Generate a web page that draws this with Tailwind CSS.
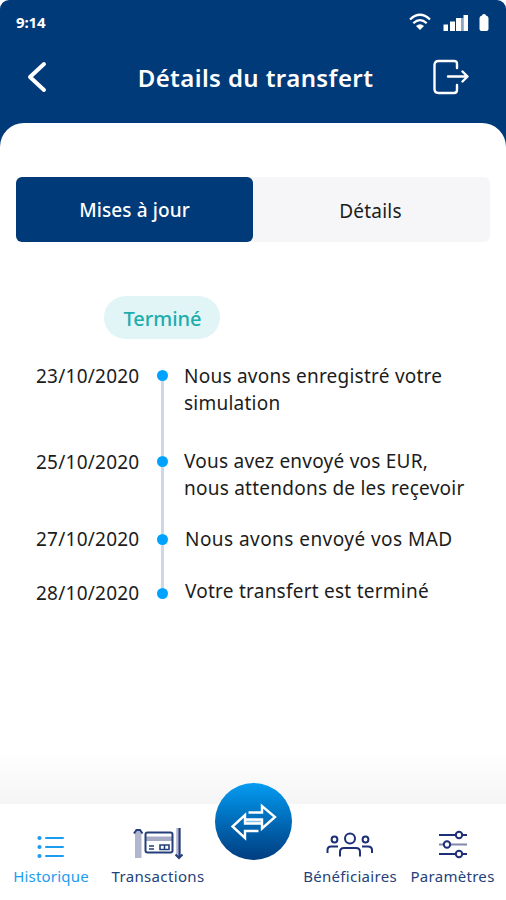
<!DOCTYPE html>
<html lang="fr">
<head>
<meta charset="utf-8">
<title>Détails du transfert</title>
<script src="https://cdn.jsdelivr.net/npm/@tailwindcss/browser@4"></script>
</head>
<body class="bg-white">
<div class="w-[506px] h-[900px] overflow-hidden flex flex-col rounded-t-[9px] bg-[#003a79] font-['Noto_Sans','Open_Sans',sans-serif] text-[#1c1c1c] whitespace-nowrap">
  <header class="h-[123px] shrink-0 text-white">
    <div class="h-[44px] pl-4 pr-[17px] flex items-center justify-between">
      <span class="text-[15px] font-bold leading-none tracking-[-0.1px]">9:14</span>
      <svg class="w-[80px] h-[20px]" viewBox="0 0 80 20" fill="none">
        <g stroke="#fff" stroke-width="2.2"><path d="M1 7.500Q11 -2 21 7.500M4.300 11.200Q11 5 17.700 11.200"/></g>
        <path d="M7 14Q11 10.500 15 14L11 18Z" fill="#fff"/>
        <path d="M34.500 12.500h4.500v6.500h-4.500zM41 9.500h5v9.500h-5zM47 6h5v13h-5zM54.500 3h4.500v16h-4.500z" fill="#fff"/>
        <path d="M52 6h2.500v13h-2.500z" fill="#fff" fill-opacity=".55"/>
        <path d="M73 3.500q0-1.500 2-1.500t2 1.500q2.500 .5 2.500 2.500V17q0 2-2 2h-5q-2 0-2-2V6q0-2 2.500-2.500z" fill="#fff"/>
      </svg>
    </div>
    <div class="h-[66px] pl-[26px] pr-[37px] grid grid-cols-[22px_1fr_36px] items-center">
      <svg class="w-[22px] h-[32px]" viewBox="0 0 22 32" fill="none" stroke="#fff" stroke-width="4" stroke-linecap="round" stroke-linejoin="round"><path d="M18 3L4 16L18 29"/></svg>
      <h1 class="text-[24px] font-semibold leading-none tracking-[0.4px] pl-[30px] pt-px text-center">Détails du transfert</h1>
      <svg class="w-[36px] h-[36px]" viewBox="0 0 36 36" fill="none" stroke="#fff" stroke-width="2.400" stroke-linecap="round" stroke-linejoin="round"><path d="M24 9V5Q24 2 21 2H5.500Q1.500 2 1.500 6V30Q1.500 34 5.500 34H21Q24 34 24 31V26M15 17.500H34M29.500 12.500L34.500 17.500L29.500 22.500"/></svg>
    </div>
  </header>
  <main class="flex-1 bg-white rounded-t-[24px] flex flex-col">
    <div class="mt-[54px] mx-4 h-[65px] flex rounded-[6px] bg-[#f6f6f8] text-[19px]">
      <div class="w-[237px] rounded-[6px] bg-[#003a79] text-white font-medium tracking-[0.1px] flex items-center justify-center pt-px">Mises à jour</div>
      <div class="flex-1 flex items-center justify-center pt-[3px] pr-[2px] tracking-[0.2px]">Détails</div>
    </div>
    <div class="mt-[54px] ml-[104px] w-[116px] h-[43px] rounded-full bg-[#e1f5f7] text-[#1cadac] text-[20px] font-medium flex items-center justify-center pt-[2px] pl-px">Terminé</div>
    <div class="mt-[23px] pl-9 flex flex-col text-[19px] leading-[27px] tracking-[0.24px]">
      <div class="h-[86px] flex"><span class="w-[120px] pt-px">23/10/2020</span><span class="w-3 mr-4 flex flex-col items-center pt-[7.5px] -mb-[7.5px]"><i class="size-[11px] shrink-0 rounded-full bg-[#00a2ff]"></i><i class="w-[3px] flex-1 bg-[#ccd8e6]"></i></span><p class="pt-px">Nous avons enregistré votre<br>simulation</p></div>
      <div class="h-[78px] flex"><span class="w-[120px] pt-px">25/10/2020</span><span class="w-3 mr-4 flex flex-col items-center pt-[7.5px] -mb-[7.5px]"><i class="size-[11px] shrink-0 rounded-full bg-[#00a2ff]"></i><i class="w-[3px] flex-1 bg-[#ccd8e6]"></i></span><p>Vous avez envoyé vos EUR,<br>nous attendons de les reçevoir</p></div>
      <div class="h-[54px] flex"><span class="w-[120px]">27/10/2020</span><span class="w-3 mr-[17px] flex flex-col items-center pt-[7.5px] -mb-[7.5px]"><i class="size-[11px] shrink-0 rounded-full bg-[#00a2ff]"></i><i class="w-[3px] flex-1 bg-[#ccd8e6]"></i></span><p class="tracking-[0.45px]">Nous avons envoyé vos MAD</p></div>
      <div class="h-[27px] flex"><span class="w-[120px]">28/10/2020</span><span class="w-3 mr-[17px] flex flex-col items-center pt-[7.5px]"><i class="size-[11px] shrink-0 rounded-full bg-[#00a2ff]"></i></span><p class="-mt-[2px]">Votre transfert est terminé</p></div>
    </div>
    <div class="mt-auto h-[54px] bg-linear-to-b from-white to-[#f5f5f5]"></div>
  </main>
  <nav class="relative h-[96px] shrink-0 bg-white text-[15px] text-[#243f7a] leading-[20px] flex">
    <div class="w-[102px] pt-[26px] flex flex-col items-center text-[#1c9cf0]">
      <svg class="w-[28px] h-[36px]" viewBox="0 0 28 36" stroke="#1c9cf0" stroke-width="2" stroke-linecap="round"><path d="M9 8H26M9 17H26M9 26H26"/><path d="M2.500 8h.01M2.500 17h.01M2.500 26h.01" stroke-width="4.200"/></svg>
      <span class="tracking-[0.2px]">Historique</span>
    </div>
    <div class="w-[112px] pt-[20px] flex flex-col items-center">
      <svg class="w-[52px] h-[42px]" viewBox="0 0 52 42" fill="none" stroke="#243f7a" stroke-width="2">
        <path d="M3 7h6.500v27H3z" fill="#b2b5ce" stroke="none"/><path d="M2 9.500L4.500 6H8L10.500 9.500"/>
        <path d="M14 12.500h26v4.500H14z" fill="#a6aac5" stroke="none"/><rect x="13.500" y="8.500" width="27" height="20" rx="2"/>
        <path d="M17 22h5M17 25h5M28 21h9v4.500h-9zM32.500 21v4.500" stroke-width="1.600"/>
        <path d="M46.500 4V32" stroke-width="4.500" stroke="#b2b5ce"/><path d="M47.500 4V33M43.500 30.500L47 34L50.500 30.500"/>
      </svg>
      <span class="tracking-[0.35px]">Transactions</span>
    </div>
    <div class="w-[90px]"></div>
    <div class="w-[92px] pt-[20px] flex flex-col items-center">
      <svg class="w-[50px] h-[42px]" viewBox="0 0 50 42" fill="none" stroke="#1c2f78" stroke-width="2"><circle cx="25" cy="14.500" r="5"/><circle cx="9.500" cy="15.500" r="2.900"/><circle cx="40.500" cy="15.500" r="2.900"/><path d="M15 32.500V28Q15 24 19 24H31Q35 24 35 28V32.500M2.500 29V26Q2.500 22.500 6 22.500H13M37 22.500H43Q47 22.500 47 26V29"/></svg>
      <span class="tracking-[0.3px]">Bénéficiaires</span>
    </div>
    <div class="w-[110px] pt-[20px] flex flex-col items-center">
      <svg class="ml-[3px] w-[30px] h-[42px]" viewBox="0 0 30 42" fill="#fff" stroke="#1c2f78" stroke-width="2"><path d="M1 11H29M1 30H29"/><path d="M1 20.500H29" stroke="#8187ad"/><circle cx="21" cy="11" r="3.200"/><circle cx="9" cy="20.500" r="3.200"/><circle cx="21" cy="30" r="3.200"/></svg>
      <span class="ml-[3px] tracking-[0.3px]">Paramètres</span>
    </div>
    <div class="absolute left-[215px] -top-[21px] size-[77px] rounded-full bg-linear-to-b from-[#069cf2] to-[#003d80] flex items-center justify-center">
      <svg class="w-[46px] h-[38px]" viewBox="0 0 46 38" fill="none" stroke="#fff" stroke-width="2.400"><path d="M14 18.500H31" stroke="#8dbfe6" stroke-width="3"/><path d="M17.500 9.500H31V3L44 14L31 25.500V16.500H14M31 20.500H14V12L1.500 23.500L14 35V28H27.500"/></svg>
    </div>
  </nav>
</div>
</body>
</html>
